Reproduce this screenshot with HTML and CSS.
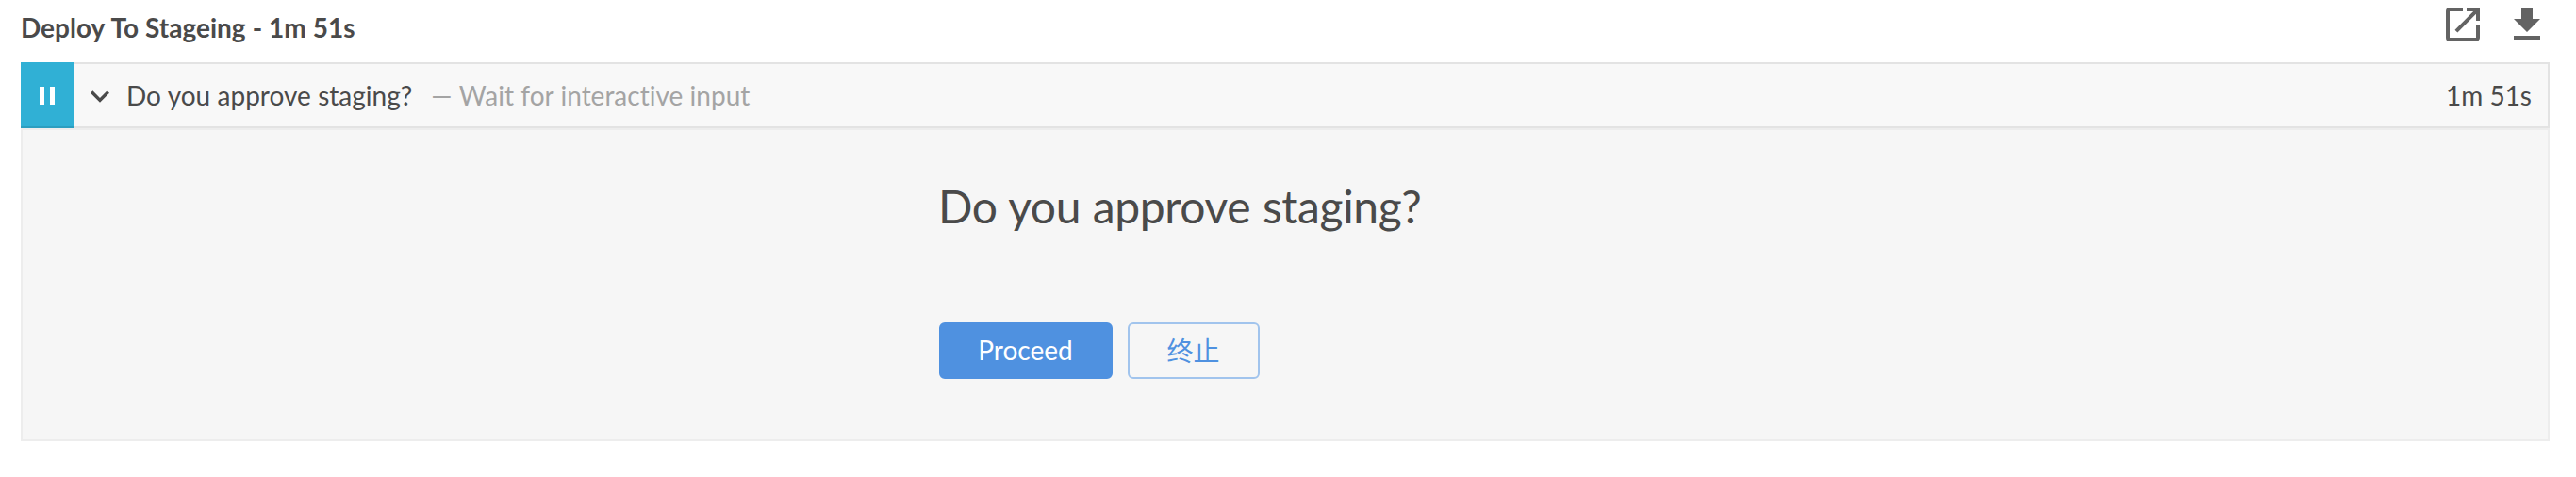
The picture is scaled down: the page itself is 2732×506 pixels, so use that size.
FILE: index.html
```html
<!DOCTYPE html>
<html lang="en">
<head>
<meta charset="utf-8">
<title>Deploy To Stageing</title>
<link rel="stylesheet" href="styles.css">
</head>
<body>
<main class="stage">
  <header class="stage-header">
    <h1 class="stage-title">Deploy <span class="word">To</span> Stageing - 1m 51s</h1>
    <div class="stage-actions">
      <svg class="action-icon" viewBox="0 0 24 24"><path d="M19 19H5V5h7V3H5a2 2 0 0 0-2 2v14a2 2 0 0 0 2 2h14c1.1 0 2-.9 2-2v-7h-2v7zM14 3v2h3.59l-9.83 9.83 1.41 1.41L19 6.41V10h2V3h-7z"/></svg>
      <svg class="action-icon" viewBox="0 0 24 24"><path d="M19 9h-4V3H9v6H5l7 7 7-7zM5 18v2h14v-2H5z"/></svg>
    </div>
  </header>
  <section class="step">
    <div class="step-header">
      <div class="step-status">
        <svg class="pause-icon" viewBox="0 0 16 19"><path d="M0 0h5v19H0zM11 0h5v19h-5z"/></svg>
      </div>
      <div class="step-bar">
        <svg class="chevron" viewBox="0 0 24 24"><path d="M16.59 8.59L12 13.17 7.41 8.59 6 10l6 6 6-6z"/></svg>
        <span class="step-name">Do you approve staging?</span>
        <span class="step-desc">— <span class="word">Wait</span> for interactive input</span>
        <span class="step-time">1m 51s</span>
      </div>
    </div>
    <div class="step-body">
      <div class="prompt">
        <h2 class="prompt-title">Do you approve staging?</h2>
        <div class="prompt-buttons">
          <button class="btn btn-primary">Proceed</button>
          <button class="btn btn-secondary" lang="zh">终止</button>
        </div>
      </div>
    </div>
  </section>
</main>
</body>
</html>
```
FILE: styles.css
```css
* { box-sizing: border-box; }
body {
  margin: 0;
  background: #fff;
  color: #4a4a4a;
  font-family: Lato, "Noto Sans CJK SC", sans-serif;
  font-size: 28px;
  font-variant-ligatures: none;
}
h1, h2 { margin: 0; }
svg { display: block; flex: none; }
.word { display: inline-block; }
.stage { padding: 0 28px 0 22px; }
.stage-header {
  display: flex;
  justify-content: space-between;
  height: 66px;
}
.stage-title {
  padding-top: 11px;
  font-size: 28px;
  line-height: 36px;
  font-weight: 700;
  word-spacing: .2px;
}
.stage-actions { display: flex; gap: 20px; padding-top: 2px; }
.action-icon { width: 48px; height: 48px; fill: #636363; }
.step-header { display: flex; height: 70px; }
.step-status {
  display: flex;
  align-items: center;
  justify-content: center;
  width: 56px;
  background: #30b0d5;
  border-bottom: 2px solid #2b9ec0;
}
.pause-icon { width: 16px; height: 19px; margin: 3px 0 0; fill: #fff; }
.step-bar {
  display: flex;
  flex: 1;
  align-items: center;
  padding: 0 17px 0 8px;
  background: #f8f8f8;
  border: 2px solid #e3e3e3;
  border-left: 0;
  line-height: 36px;
}
.chevron { width: 40px; height: 40px; margin: 2px 8px 0 0; fill: #4a4a4a; }
.step-name { margin-right: 20px; word-spacing: .2px; }
.step-desc { color: #a4a4a4; word-spacing: .2px; }
.step-time { margin-left: auto; }
.step-body {
  height: 332px;
  padding: 52px 0 0 972px;
  background: #f6f6f6;
  border: 2px solid #ededed;
}
.prompt-title {
  margin-left: -1px;
  font-size: 48px;
  line-height: 58px;
  font-weight: 400;
  letter-spacing: -.4px;
  word-spacing: .9px;
}
.prompt-buttons { display: flex; gap: 16px; margin-top: 94px; }
.btn {
  height: 60px;
  padding: 0 1px 2px 0;
  border: 2px solid #4f91e0;
  border-radius: 6px;
  font: inherit;
}
.btn-primary { width: 184px; background: #4f91e0; color: #fff; }
.btn-secondary {
  width: 140px;
  background: transparent;
  border-color: #a1c4ed;
  color: #4f91e0;
  font-size: 28px;
}
```
